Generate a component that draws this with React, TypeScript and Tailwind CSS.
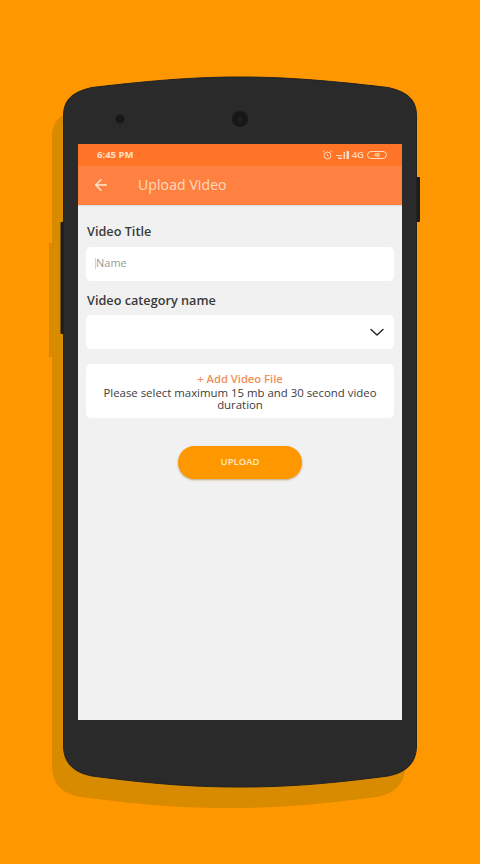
import { ArrowLeft } from "lucide-react";

const phonePath =
    "M63.500 116C63.500 100 72 92 92 87.500C160 79.500 200 77 240 77C280 77 320 79.500 388 87.500C408 92 416.500 100 416.500 116L416.500 745C416.500 762 408 772 388 776C320 785 280 787 240 787C200 787 160 785 92 776C72 772 63.500 762 63.500 745Z";

function PhoneBody() {
    return (
        <svg className="absolute inset-0" width="480" height="864" viewBox="0 0 480 864">
            {/* shadow */}
            <g fill="#d98b00">
                <path d={phonePath} transform="translate(-11.5 21)" />
                <rect x="49" y="243" width="4" height="114" rx="1" />
            </g>
            {/* side buttons */}
            <rect x="60.5" y="222" width="4" height="112" rx="1" fill="#1d1d1d" />
            <rect x="415" y="177" width="5" height="45" rx="1" fill="#1d1d1d" />
            <path d={phonePath} fill="#2a2a2a" stroke="#222" strokeWidth="1" />
            {/* speaker + camera */}
            <circle cx="120" cy="119" r="4.5" fill="#171717" />
            <circle cx="240" cy="119" r="8" fill="#171717" />
            <circle cx="240" cy="119" r="2.5" fill="#1f1f1f" />
        </svg>
    );
}

function StatusIcons() {
    return (
        <div className="flex items-center gap-[3px] text-[#ffd9bd]">
            <svg width="11" height="10" viewBox="0 0 11 10" fill="none" stroke="currentColor" strokeWidth="1">
                <circle cx="5.5" cy="5.5" r="3.5" />
                <path d="M5.5 4v1.7l1 .8M1 2l1.5-1.2M10 2L8.5.8" />
            </svg>
            <svg width="13" height="9" viewBox="0 0 13 9" fill="currentColor">
                <path d="M0 4h6v1H0zM2 6.500h4V8H2zM7.500 1H9v7H7.500zM10.500 0H13v8h-2.500z" />
            </svg>
            <span className="text-[9.500px] font-semibold leading-none">4G</span>
            <div className="w-[20px] h-[8px] rounded-full border border-current flex items-center justify-center">
                <span className="text-[5px] leading-none font-bold">48</span>
            </div>
        </div>
    );
}

export default function App() {
    return (
        <div
            className="relative w-[480px] h-[864px] bg-[#ff9800] overflow-hidden pt-[144px] pl-[78px]"
            style={{ fontFamily: '"Open Sans", "Noto Sans", sans-serif' }}
        >
            <PhoneBody />
            <div className="relative w-[324px] h-[576px] bg-[#f1f1f1] flex flex-col">
                <div className="h-[22px] bg-[#ff7427] flex items-center justify-between pl-[19px] pr-[15px]">
                    <span className="text-[9.500px] font-bold text-[#ffe0c8]">6:45 PM</span>
                    <StatusIcons />
                </div>
                <div className="h-[39px] bg-[#ff8142] flex items-center pl-[14px] pb-[2px] shadow-[0_1px_1px_rgba(0,0,0,0.08)]">
                    <ArrowLeft size={18} strokeWidth={2} className="text-[#ffe6d3]" />
                    <span className="ml-[28px] text-[14px] font-medium text-[#ffd9bd] tracking-[0.1px]">Upload Video</span>
                </div>

                <div className="flex flex-col px-[8px] pt-[17px]">
                    <label className="text-[12.700px] leading-[18px] font-semibold text-[#3a3a3a] pl-px">Video Title</label>
                    <div className="mt-[7px] h-[34px] bg-white rounded-[5px] flex items-center pl-[9px] pb-[2px]">
                        <span className="w-px h-[11px] bg-[#e4d98a]" />
                        <span className="text-[11px] text-[#999]">Name</span>
                    </div>

                    <label className="mt-[10px] text-[12.700px] leading-[18px] font-semibold text-[#3a3a3a] pl-px">Video category name</label>
                    <div className="mt-[6px] h-[34px] bg-white rounded-[5px] flex items-center justify-end pr-[10px]">
                        <svg width="14" height="9" viewBox="0 0 14 9" fill="none" stroke="#222" strokeWidth="1.4" strokeLinecap="round" strokeLinejoin="round">
                            <path d="M1 1.500L7 7L13 1.500" />
                        </svg>
                    </div>

                    <div className="mt-[15px] h-[54px] bg-white rounded-[5px] flex flex-col items-center justify-center pt-[2px] px-[12px] text-center">
                        <span className="text-[11.200px] leading-[12px] font-semibold text-[#f0905a]">+ Add Video File</span>
                        <span className="mt-[2px] text-[11.400px] leading-[12px] text-[#3c3c3c]">
                            Please select maximum 15 mb and 30 second video duration
                        </span>
                    </div>

                    <button className="self-center mt-[28px] w-[124px] h-[33px] rounded-full bg-[#ff9800] text-[9.500px] font-semibold text-[#ffe8c4] shadow-[0_1px_2px_rgba(150,90,0,0.5)]">
                        UPLOAD
                    </button>
                </div>
            </div>
        </div>
    );
}
